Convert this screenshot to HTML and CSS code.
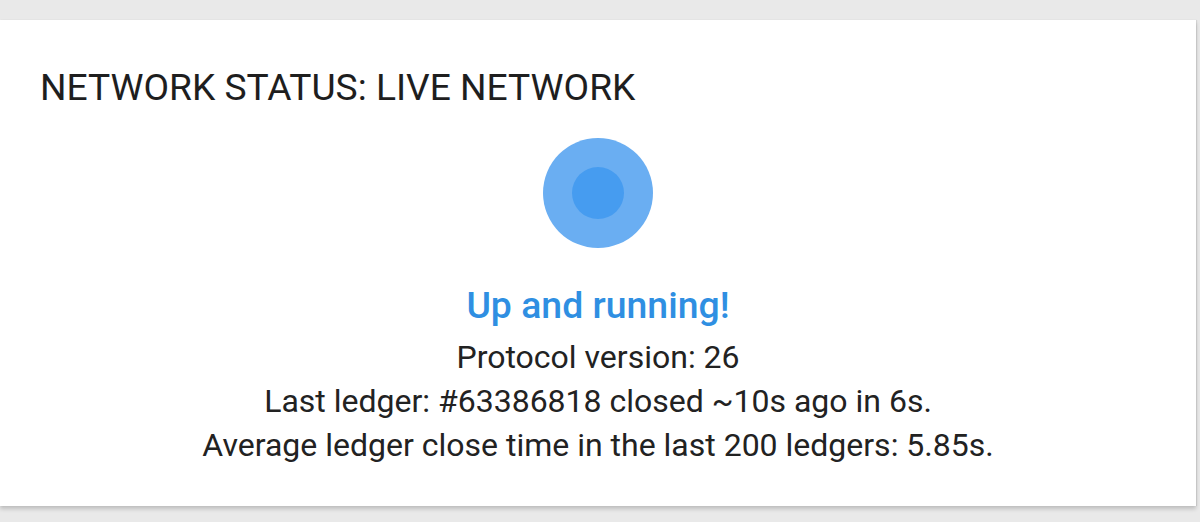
FILE: index.html
```html
<!DOCTYPE html>
<html lang="en">
<head>
<meta charset="utf-8">
<title>Network status</title>
<link rel="stylesheet" href="styles.css">
</head>
<body>
<main class="page">
  <section class="card">
    <h2 class="card-title">NETWORK STATUS: LIVE NETWORK</h2>
    <div class="status">
      <div class="pulse"><span class="pulse-core"></span></div>
      <p class="status-label">Up and running!</p>
      <p class="status-line">Protocol version: 26</p>
      <p class="status-line">Last ledger: #63386818 closed ~10s ago in 6s.</p>
      <p class="status-line">Average ledger close time in the last 200 ledgers: 5.85s.</p>
    </div>
  </section>
</main>
</body>
</html>
```
FILE: styles.css
```css
html, body {
  margin: 0;
  padding: 0;
  background: #e9e9e9;
  font-family: Roboto, "Liberation Sans", sans-serif;
  color: #222;
}

.page {
  padding: 20px 4px 0 0;
  height: 522px;
  box-sizing: border-box;
}

.card {
  background: #fff;
  height: 486px;
  box-sizing: border-box;
  padding: 47px 0 0 40px;
  box-shadow: 0 3px 4px rgba(0, 0, 0, 0.18), 1px 0 1px rgba(0, 0, 0, 0.08);
}

.card-title {
  margin: 0;
  font-size: 37.2px;
  font-weight: 400;
  line-height: 40px;
  color: #1e1e1e;
}

.status {
  display: flex;
  flex-direction: column;
  align-items: center;
  margin-left: -40px;
  padding-top: 31px;
}

.pulse {
  width: 110px;
  height: 110px;
  border-radius: 50%;
  background: #6aaef2;
  display: flex;
  align-items: center;
  justify-content: center;
}

.pulse-core {
  width: 52px;
  height: 52px;
  border-radius: 50%;
  background: #469cf0;
}

.status-label {
  margin: 31px 0 4px;
  font-size: 37.4px;
  font-weight: 500;
  line-height: 52px;
  color: #2f8fe2;
}

.status-line {
  margin: 0;
  font-size: 32px;
  line-height: 44px;
  color: #222;
}
```
